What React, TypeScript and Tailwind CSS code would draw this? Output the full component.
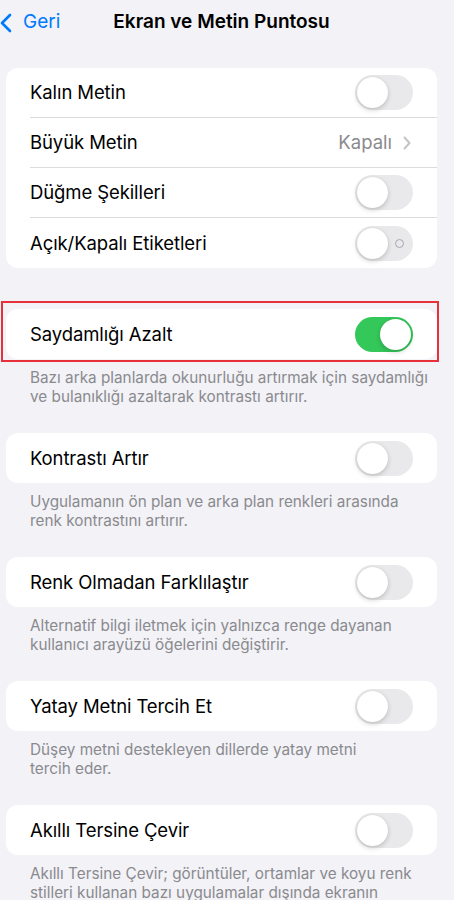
import React from "react";

function Toggle({ on = false, label = false }: { on?: boolean; label?: boolean }) {
  return (
    <div
      className={
        "relative w-[58px] h-[35px] rounded-full shrink-0 flex items-center " +
        (on ? "bg-[#34c759] justify-end" : "bg-[#e9e9eb] justify-start")
      }
    >
      {label && !on && (
        <div className="absolute left-[40px] top-[13px] w-[9px] h-[9px] rounded-full border border-[#a8a8ad]" />
      )}
      <div className="mx-[2px] w-[31px] h-[31px] rounded-full bg-white shadow-[0_2px_5px_rgba(0,0,0,0.18),0_0_1px_rgba(0,0,0,0.12)]" />
    </div>
  );
}

function Row({
  label,
  children,
  divider = false,
}: {
  label: string;
  children: React.ReactNode;
  divider?: boolean;
}) {
  return (
    <div className="pl-6">
      <div
        className={
          "h-[50px] flex items-center justify-between pr-6 " +
          (divider ? "border-b border-[#dcdce0]" : "")
        }
      >
        <span className="text-[18.5px] text-black tracking-[-0.1px] pt-[1px]">{label}</span>
        {children}
      </div>
    </div>
  );
}

function Section({
  label,
  desc,
  highlight = false,
  on = false,
}: {
  label: string;
  desc: string[];
  highlight?: boolean;
  on?: boolean;
}) {
  return (
    <div className="mb-[27px]">
      <div className="relative bg-white rounded-[12px]">
        <Row label={label}>
          <Toggle on={on} />
        </Row>
        {highlight && (
          <div className="absolute left-[-5px] top-[-8px] right-[-2px] bottom-[-3px] border-2 border-[#e8303a] pointer-events-none" />
        )}
      </div>
      <div className="pt-[9px] pl-6 pr-2 text-[15.3px] leading-[19px] text-[#8a8a8e]">
        {desc.map((d, i) => (
          <div key={i} className="whitespace-nowrap">{d}</div>
        ))}
      </div>
    </div>
  );
}

export default function App() {
  return (
    <div
      className="w-[454px] h-[900px] overflow-hidden bg-[#f2f2f7]"
      style={{ fontFamily: "Inter, 'Noto Sans', sans-serif" }}
    >
      <div className="w-[443px]">
        <div className="h-[45px] grid grid-cols-[1fr_auto_1fr] items-center">
          <div className="flex items-center gap-[11px]">
            <svg width="13" height="20" viewBox="0 0 13 20" className="ml-[-1px]">
              <path
                d="M11 2 L3 10 L11 18"
                fill="none"
                stroke="#007aff"
                strokeWidth="2.6"
                strokeLinecap="round"
                strokeLinejoin="round"
              />
            </svg>
            <span className="text-[19px] text-[#007aff]">Geri</span>
          </div>
          <div className="text-[19px] font-semibold text-black">Ekran ve Metin Puntosu</div>
          <div />
        </div>

        <div className="ml-[6px] w-[431px] mt-[23px]">
          <div className="bg-white rounded-[12px] mb-[41px]">
            <Row label="Kalın Metin" divider>
              <Toggle />
            </Row>
            <Row label="Büyük Metin" divider>
              <div className="flex items-center gap-[11px] pr-[2px]">
                <span className="text-[18.5px] text-[#8a8a8e]">Kapalı</span>
                <svg width="8" height="14" viewBox="0 0 8 14">
                  <path
                    d="M1.5 1.5 L6.5 7 L1.5 12.5"
                    fill="none"
                    stroke="#c4c4c7"
                    strokeWidth="2"
                    strokeLinecap="round"
                    strokeLinejoin="round"
                  />
                </svg>
              </div>
            </Row>
            <Row label="Düğme Şekilleri" divider>
              <Toggle />
            </Row>
            <Row label="Açık/Kapalı Etiketleri">
              <Toggle label />
            </Row>
          </div>

          <Section
            label="Saydamlığı Azalt"
            highlight
            on
            desc={[
              "Bazı arka planlarda okunurluğu artırmak için saydamlığı",
              "ve bulanıklığı azaltarak kontrastı artırır.",
            ]}
          />
          <Section
            label="Kontrastı Artır"
            desc={[
              "Uygulamanın ön plan ve arka plan renkleri arasında",
              "renk kontrastını artırır.",
            ]}
          />
          <Section
            label="Renk Olmadan Farklılaştır"
            desc={[
              "Alternatif bilgi iletmek için yalnızca renge dayanan",
              "kullanıcı arayüzü öğelerini değiştirir.",
            ]}
          />
          <Section
            label="Yatay Metni Tercih Et"
            desc={["Düşey metni destekleyen dillerde yatay metni", "tercih eder."]}
          />
          <Section
            label="Akıllı Tersine Çevir"
            desc={[
              "Akıllı Tersine Çevir; görüntüler, ortamlar ve koyu renk",
              "stilleri kullanan bazı uygulamalar dışında ekranın",
            ]}
          />
        </div>
      </div>
    </div>
  );
}
